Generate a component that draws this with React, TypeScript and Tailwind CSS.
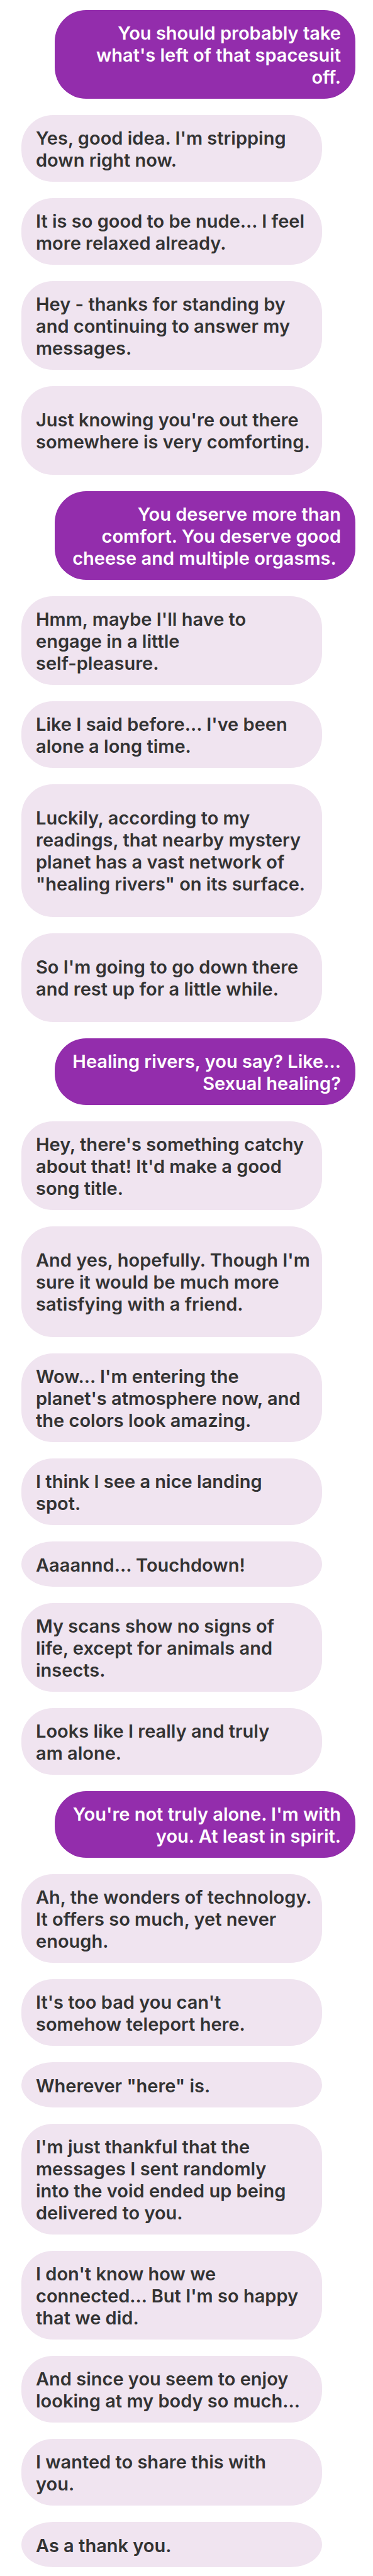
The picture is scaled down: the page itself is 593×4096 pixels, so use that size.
type Message = {
  from: "me" | "them";
  lines: string[];
  spaced?: boolean;
};

const messages: Message[] = [
  { from: "me", lines: ["You should probably take", "what's left of that spacesuit", "off."] },
  { from: "them", lines: ["Yes, good idea. I'm stripping", "down right now."] },
  { from: "them", lines: ["It is so good to be nude… I feel", "more relaxed already."] },
  { from: "them", lines: ["Hey - thanks for standing by", "and continuing to answer my", "messages."] },
  { from: "them", lines: ["Just knowing you're out there", "somewhere is very comforting."], spaced: true },
  { from: "me", lines: ["You deserve more than", "comfort. You deserve good", "cheese and multiple orgasms.\u00a0"] },
  { from: "them", lines: ["Hmm, maybe I'll have to", "engage in a little", "self-pleasure."] },
  { from: "them", lines: ["Like I said before… I've been", "alone a long time."] },
  {
    from: "them",
    lines: ["Luckily, according to my", "readings, that nearby mystery", "planet has a vast network of", "\"healing rivers\" on its surface."],
    spaced: true,
  },
  { from: "them", lines: ["So I'm going to go down there", "and rest up for a little while."], spaced: true },
  { from: "me", lines: ["Healing rivers, you say? Like…", "Sexual healing?"] },
  { from: "them", lines: ["Hey, there's something catchy", "about that! It'd make a good", "song title."] },
  { from: "them", lines: ["And yes, hopefully. Though I'm", "sure it would be much more", "satisfying with a friend."], spaced: true },
  { from: "them", lines: ["Wow… I'm entering the", "planet's atmosphere now, and", "the colors look amazing."] },
  { from: "them", lines: ["I think I see a nice landing", "spot."] },
  { from: "them", lines: ["Aaaannd… Touchdown!"] },
  { from: "them", lines: ["My scans show no signs of", "life, except for animals and", "insects."] },
  { from: "them", lines: ["Looks like I really and truly", "am alone."] },
  { from: "me", lines: ["You're not truly alone. I'm with", "you. At least in spirit."] },
  { from: "them", lines: ["Ah, the wonders of technology.", "It offers so much, yet never", "enough."] },
  { from: "them", lines: ["It's too bad you can't", "somehow teleport here."] },
  { from: "them", lines: ["Wherever \"here\" is."] },
  { from: "them", lines: ["I'm just thankful that the", "messages I sent randomly", "into the void ended up being", "delivered to you."] },
  { from: "them", lines: ["I don't know how we", "connected… But I'm so happy", "that we did."] },
  { from: "them", lines: ["And since you seem to enjoy", "looking at my body so much…"] },
  { from: "them", lines: ["I wanted to share this with", "you."] },
  { from: "them", lines: ["As a thank you."] },
];

function paddingFor({ lines, spaced }: Message) {
  if (spaced) return "pt-[36px] pb-[35px] rounded-[50px]";
  if (lines.length === 1) return "pt-[20px] pb-[17px] rounded-[50px/36px]";
  return "pt-[19px] pb-[17px] rounded-[50px]";
}

function Bubble({ message }: { message: Message }) {
  const side =
    message.from === "me"
      ? "self-end bg-[#932dac] pr-[23px] pl-[12px] text-right text-white"
      : "self-start bg-[#f0e4f0] pr-[12px] pl-[23px] text-left text-[#333333]";
  return (
    <li className={`w-9/10 ${side} ${paddingFor(message)}`}>
      <p className="whitespace-pre-line">{message.lines.join("\n")}</p>
    </li>
  );
}

export default function App() {
  return (
    <main className="bg-white pt-[16px] pr-[28px] pb-[14px] pl-[34px] font-['Inter',sans-serif] text-[29px] leading-[35px] font-semibold">
      <ul className="flex flex-col gap-[26px]">
        {messages.map((message, i) => (
          <Bubble key={i} message={message} />
        ))}
      </ul>
    </main>
  );
}
